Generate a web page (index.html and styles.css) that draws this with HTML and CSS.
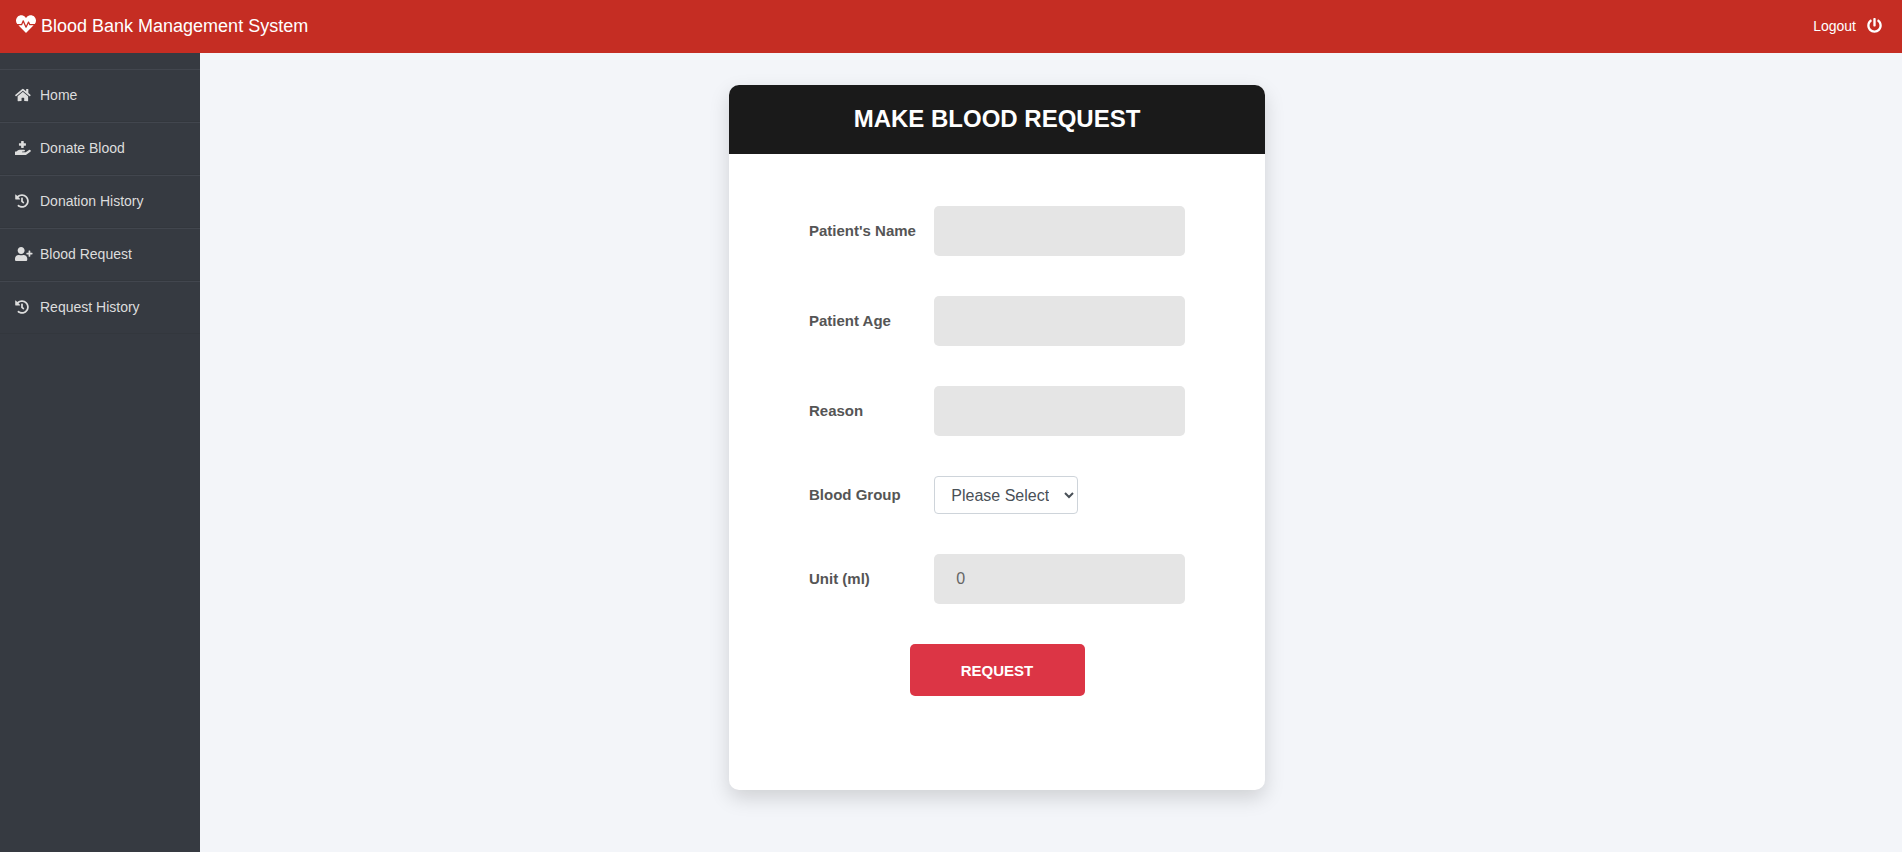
FILE: index.html
```html
<!DOCTYPE html>
<html lang="en">
<head>
<meta charset="utf-8">
<title>Blood Bank Management System</title>
<link rel="stylesheet" href="styles.css">
</head>
<body>
<header class="header">
  <a class="brand" href="#">
    <svg class="brand-icon" viewBox="0 0 512 512" aria-hidden="true"><path d="M320.2 243.8l-49.7 99.4c-6 12.1-23.4 11.7-28.9-.6l-56.9-126.3-30 71.7H60.6l182.5 186.5c7.1 7.3 18.6 7.3 25.7 0L451.4 288H342.3l-22.1-44.2zM473.7 73.9l-2.4-2.5c-51.5-52.6-135.8-52.6-187.4 0L256 100l-27.9-28.5c-51.5-52.7-135.9-52.7-187.4 0l-2.4 2.4C-10.4 123.7-12.5 203 31 256h102.4l35.9-86.2c5.4-12.9 23.6-13.1 29.3-.4l58.2 129.3 49-97.9c5.9-11.8 22.7-11.8 28.6 0l27.6 55.2H481c43.5-53 41.4-132.3-7.3-182.1z"/></svg>
    <span>Blood Bank Management System</span>
  </a>
  <a class="logout" href="#">
    <span>Logout</span>
    <svg class="logout-icon" viewBox="0 0 512 512" aria-hidden="true"><path d="M400 54.1c63 45 104 118.6 104 201.9 0 136.8-110.8 247.7-247.5 248C120 504.3 8.2 393 8 256.4 7.9 173.1 48.9 99.3 111.8 54.2c11.7-8.3 28-4.8 35 7.7L162.6 90c5.9 10.5 3.1 23.8-6.6 31-41.5 30.8-68 79.6-68 134.9-.1 92.3 74.5 168.1 168 168.1 91.6 0 168.6-74.2 168-169.1-.3-51.8-24.7-101.8-68.1-134-9.7-7.2-12.4-20.5-6.5-30.9l15.8-28.1c7-12.4 23.2-16.1 34.8-7.8zM296 264V24c0-13.3-10.7-24-24-24h-32c-13.3 0-24 10.7-24 24v240c0 13.3 10.7 24 24 24h32c13.3 0 24-10.7 24-24z"/></svg>
  </a>
</header>
<div class="layout">
  <nav class="sidebar" aria-label="Main">
    <ul class="menu">
      <li><a class="menu-link" href="#"><span class="menu-icon"><svg viewBox="0 0 576 512" aria-hidden="true"><path d="M280.37 148.26L96 300.11V464a16 16 0 0 0 16 16l112.06-.29a16 16 0 0 0 15.92-16V368a16 16 0 0 1 16-16h64a16 16 0 0 1 16 16v95.64a16 16 0 0 0 16 16.05L464 480a16 16 0 0 0 16-16V300L295.67 148.26a12.19 12.19 0 0 0-15.3 0zM571.6 251.47L488 182.56V44.05a12 12 0 0 0-12-12h-56a12 12 0 0 0-12 12v72.61L318.47 43a48 48 0 0 0-61 0L4.34 251.47a12 12 0 0 0-1.6 16.9l25.5 31A12 12 0 0 0 45.15 301l235.22-193.74a12.19 12.19 0 0 1 15.3 0L530.9 301a12 12 0 0 0 16.9-1.6l25.5-31a12 12 0 0 0-1.7-16.93z"/></svg></span>Home</a></li>
      <li><a class="menu-link" href="#"><span class="menu-icon"><svg viewBox="0 0 576 512" aria-hidden="true"><path d="M159.88,175.82h64v64a16,16,0,0,0,16,16h64a16,16,0,0,0,16-16v-64h64a16,16,0,0,0,16-16v-64a16,16,0,0,0-16-16h-64v-64a16,16,0,0,0-16-16h-64a16,16,0,0,0-16,16v64h-64a16,16,0,0,0-16,16v64A16,16,0,0,0,159.88,175.82ZM568.07,336.13a39.91,39.91,0,0,0-55.93-8.47L392.47,415.84H271.86a16,16,0,0,1,0-32H330.3c16,0,30.75-10.87,33.37-26.61a32.06,32.06,0,0,0-31.62-37.38h-160a117.7,117.7,0,0,0-74.12,26.25l-46.5,37.74H15.87a16.11,16.11,0,0,0-16,16v96a16.11,16.11,0,0,0,16,16h347a104.8,104.8,0,0,0,62.7-20.61L559.6,392.1A40,40,0,0,0,568.07,336.13Z"/></svg></span>Donate Blood</a></li>
      <li><a class="menu-link" href="#"><span class="menu-icon"><svg viewBox="0 0 512 512" aria-hidden="true"><path d="M504 255.531c.253 136.64-111.18 248.372-247.82 248.468-59.015.042-113.223-20.53-155.822-54.911-11.077-8.94-11.905-25.541-1.839-35.607l11.267-11.267c8.609-8.609 22.353-9.551 31.891-1.984C173.062 425.135 212.781 440 256 440c101.705 0 184-82.311 184-184 0-101.705-82.311-184-184-184-48.814 0-93.149 18.969-126.068 49.932l50.754 50.754c10.08 10.08 2.941 27.314-11.313 27.314H24c-8.837 0-16-7.163-16-16V38.627c0-14.254 17.234-21.393 27.314-11.314l49.372 49.372C129.209 34.136 189.552 8 256 8c136.81 0 247.747 110.78 248 247.531zm-180.912 78.784l9.823-12.63c8.138-10.463 6.253-25.542-4.21-33.679L288 256.349V152c0-13.255-10.745-24-24-24h-16c-13.255 0-24 10.745-24 24v135.651l65.409 50.874c10.463 8.137 25.541 6.253 33.679-4.21z"/></svg></span>Donation History</a></li>
      <li><a class="menu-link" href="#"><span class="menu-icon"><svg viewBox="0 0 640 512" aria-hidden="true"><path d="M624 208h-64v-64c0-8.8-7.2-16-16-16h-32c-8.8 0-16 7.2-16 16v64h-64c-8.8 0-16 7.2-16 16v32c0 8.8 7.2 16 16 16h64v64c0 8.8 7.2 16 16 16h32c8.8 0 16-7.2 16-16v-64h64c8.8 0 16-7.2 16-16v-32c0-8.8-7.2-16-16-16zm-400 48c70.7 0 128-57.3 128-128S294.7 0 224 0 96 57.3 96 128s57.3 128 128 128zm89.6 32h-16.7c-22.2 10.2-46.9 16-72.9 16s-50.6-5.8-72.9-16h-16.7C60.2 288 0 348.2 0 422.4V464c0 26.5 21.5 48 48 48h352c26.5 0 48-21.5 48-48v-41.6c0-74.2-60.2-134.4-134.4-134.4z"/></svg></span>Blood Request</a></li>
      <li><a class="menu-link" href="#"><span class="menu-icon"><svg viewBox="0 0 512 512" aria-hidden="true"><path d="M504 255.531c.253 136.64-111.18 248.372-247.82 248.468-59.015.042-113.223-20.53-155.822-54.911-11.077-8.94-11.905-25.541-1.839-35.607l11.267-11.267c8.609-8.609 22.353-9.551 31.891-1.984C173.062 425.135 212.781 440 256 440c101.705 0 184-82.311 184-184 0-101.705-82.311-184-184-184-48.814 0-93.149 18.969-126.068 49.932l50.754 50.754c10.08 10.08 2.941 27.314-11.313 27.314H24c-8.837 0-16-7.163-16-16V38.627c0-14.254 17.234-21.393 27.314-11.314l49.372 49.372C129.209 34.136 189.552 8 256 8c136.81 0 247.747 110.78 248 247.531zm-180.912 78.784l9.823-12.63c8.138-10.463 6.253-25.542-4.21-33.679L288 256.349V152c0-13.255-10.745-24-24-24h-16c-13.255 0-24 10.745-24 24v135.651l65.409 50.874c10.463 8.137 25.541 6.253 33.679-4.21z"/></svg></span>Request History</a></li>
    </ul>
  </nav>
  <main class="main">
    <section class="card">
      <h1 class="card-title">MAKE BLOOD REQUEST</h1>
      <form class="form">
        <div class="row"><label class="label" for="name">Patient's Name</label><input class="input" id="name" type="text"></div>
        <div class="row"><label class="label" for="age">Patient Age</label><input class="input" id="age" type="text"></div>
        <div class="row"><label class="label" for="reason">Reason</label><input class="input" id="reason" type="text"></div>
        <div class="row"><label class="label" for="group">Blood Group</label><select class="select" id="group"><option>Please Select</option><option>O+</option><option>O-</option><option>A+</option><option>A-</option><option>B+</option><option>B-</option><option>AB+</option><option>AB-</option></select></div>
        <div class="row"><label class="label" for="unit">Unit (ml)</label><input class="input" id="unit" type="text" inputmode="numeric" value="0"></div>
        <button class="submit" type="button">REQUEST</button>
      </form>
    </section>
  </main>
</div>
</body>
</html>
```
FILE: styles.css
```css
*, *::before, *::after { box-sizing: border-box; }

body {
  margin: 0;
  min-height: 100vh;
  display: flex;
  flex-direction: column;
  background: #f3f5f9;
  color: #555;
  font-family: "Liberation Sans", Arial, sans-serif;
  font-size: 16px;
}

a { color: inherit; text-decoration: none; }
svg { display: block; fill: currentColor; }

.header {
  display: flex;
  align-items: center;
  justify-content: space-between;
  height: 53px;
  padding: 0 20px 2px 16px;
  background: #c52d23;
  color: #fff;
}

.brand { display: flex; align-items: flex-start; gap: 5px; font-size: 18px; line-height: 24px; }
.brand-icon { width: 20px; height: 20px; }
.logout { display: flex; align-items: center; gap: 11px; font-size: 14px; line-height: 20px; }
.logout-icon { width: 15px; height: 15px; }

.layout { display: flex; flex: 1; }

.sidebar {
  flex: none;
  width: 200px;
  padding-top: 16px;
  background: #363a41;
  color: #ddd;
}

.menu { margin: 0; padding: 0; list-style: none; }

.menu-link {
  display: flex;
  align-items: center;
  height: 53px;
  padding: 0 0 2px 15px;
  border-top: 1px solid #42464e;
  border-bottom: 1px solid #33373d;
  font-size: 14px;
}

.menu-icon { width: 25px; }
.menu-icon svg { height: 14px; }

.main {
  flex: 1;
  padding: 32px 108px 60px 0;
}

.card {
  max-width: 536px;
  margin: 0 auto;
  overflow: hidden;
  border-radius: 10px;
  background: #fff;
  box-shadow: 0 8px 20px rgba(0, 0, 0, 0.15);
}

.card-title {
  margin: 0;
  padding: 19px 0 21px;
  background: #1a1a1a;
  color: #fff;
  font-size: 24px;
  line-height: 29px;
  text-align: center;
}

.form {
  display: flex;
  flex-direction: column;
  gap: 40px;
  padding: 52px 80px 94px;
}

.row {
  display: grid;
  grid-template-columns: 1fr 2fr;
  align-items: center;
}

.label { font-size: 15px; font-weight: 700; line-height: 20px; }

.input {
  width: 100%;
  height: 50px;
  padding: 0 22px;
  border: 0;
  border-radius: 5px;
  background: #e5e5e5;
  color: #666;
  font: inherit;
}

.select {
  justify-self: start;
  width: 144px;
  height: 38px;
  padding: 6px 12px;
  border: 1px solid #ced4da;
  border-radius: 4px;
  background: #fff;
  color: #495057;
  font: inherit;
}

.submit {
  align-self: center;
  width: 175px;
  height: 52px;
  border: 0;
  border-radius: 5px;
  background: #dc3545;
  color: #fff;
  font: inherit;
  font-size: 15px;
  font-weight: 700;
}
```
